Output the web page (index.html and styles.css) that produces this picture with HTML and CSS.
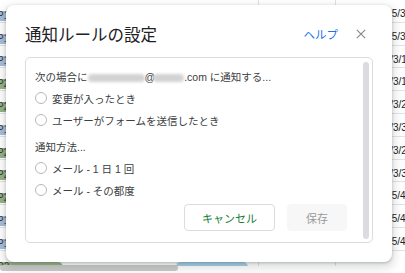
FILE: index.html
```html
<!DOCTYPE html>
<html lang="ja">
<head>
    <meta charset="UTF-8">
    <meta name="viewport" content="width=device-width, initial-scale=1.0">
    <title>通知ルールの設定</title>
    <link rel="stylesheet" href="styles.css">
</head>
<body>
    <div class="sheet">
        <div class="row"><div class="col-a"><span class="chip p1">P1</span></div><div class="col-b"></div><div class="date">2025/3/</div></div>
        <div class="row"><div class="col-a"><span class="chip p1">P1</span></div><div class="col-b"></div><div class="date">2025/3/</div></div>
        <div class="row"><div class="col-a"><span class="chip p1">P1</span></div><div class="col-b"></div><div class="date shift">2025/3/1</div></div>
        <div class="row"><div class="col-a"><span class="chip p2">P2</span></div><div class="col-b"></div><div class="date shift">2025/3/1</div></div>
        <div class="row"><div class="col-a"><span class="chip p2">P2</span></div><div class="col-b"></div><div class="date shift">2025/3/2</div></div>
        <div class="row"><div class="col-a"><span class="chip p1">P1</span></div><div class="col-b"></div><div class="date shift">2025/3/3</div></div>
        <div class="row"><div class="col-a"><span class="chip p2">P2</span></div><div class="col-b"></div><div class="date shift">2025/3/2</div></div>
        <div class="row"><div class="col-a"><span class="chip p2">P2</span></div><div class="col-b"></div><div class="date shift">2025/3/3</div></div>
        <div class="row"><div class="col-a"><span class="chip p2">P2</span></div><div class="col-b"></div><div class="date">2025/4/</div></div>
        <div class="row"><div class="col-a"><span class="chip p1">P1</span></div><div class="col-b"></div><div class="date">2025/4/</div></div>
        <div class="row"><div class="col-a"><span class="chip p1">P1</span></div><div class="col-b"></div><div class="date">2025/4/</div></div>
        <div class="row"><div class="col-a"><span class="chip p2">P2</span><span class="chip tag">対応中</span></div><div class="col-b"></div><div class="date"></div></div>
    </div>
    <div class="h-scroll"></div>

    <div class="dialog">
        <div class="dialog-head">
            <div class="dialog-title">通知ルールの設定</div>
            <a class="help" href="#">ヘルプ</a>
            <svg class="close" width="10" height="10" viewBox="0 0 10 10">
                <path d="M0.8 0.8 L9.2 9.2 M9.2 0.8 L0.8 9.2" stroke="#80868b" stroke-width="1.1" fill="none"/>
            </svg>
        </div>
        <div class="rule-box">
            <div class="rule-body">
                <div class="lead">次の場合に<span class="masked wide"></span>@<span class="masked narrow"></span>.com に通知する...</div>
                <label class="option"><span class="radio"></span>変更が入ったとき</label>
                <label class="option"><span class="radio"></span>ユーザーがフォームを送信したとき</label>
                <div class="lead method">通知方法...</div>
                <label class="option"><span class="radio"></span>メール - 1 日 1 回</label>
                <label class="option"><span class="radio"></span>メール - その都度</label>
                <div class="actions">
                    <button class="btn cancel">キャンセル</button>
                    <button class="btn save">保存</button>
                </div>
            </div>
            <div class="v-scroll"><div class="thumb"></div></div>
        </div>
    </div>
</body>
</html>
```

FILE: styles.css
```css
body {
    margin: 0;
    width: 405px;
    height: 273px;
    overflow: hidden;
    position: relative;
    background: #ffffff;
    font-family: 'Liberation Sans', 'Noto Sans CJK JP', sans-serif;
}

/* spreadsheet behind the dialog */
.sheet {
    display: flex;
    flex-direction: column;
    height: 266px;
    overflow: hidden;
}

.row {
    display: grid;
    grid-template-columns: 258px 78px 1fr;
    flex: none;
    height: 22.8px;
    box-sizing: border-box;
    border-bottom: 1px solid #e3e3e3;
}

.col-a {
    display: flex;
    align-items: flex-end;
    justify-content: space-between;
    padding-bottom: 1px;
}

.col-b {
    border-left: 1px solid #e0e0e0;
    border-right: 1px solid #e0e0e0;
}

.chip {
    height: 10px;
    line-height: 10px;
    font-size: 10px;
    color: #3a3a3a;
    border-radius: 0 5px 5px 0;
}

.chip.p1,
.chip.p2 {
    width: 66px;
    margin-left: -3px;
}

.p1 {
    background: #a5bddc;
}

.p2 {
    background: #94b186;
}

.chip.tag {
    width: 72px;
    margin-right: 10px;
    border-radius: 5px;
    background: #a3cfea;
    color: #a3cfea;
}

.date {
    padding: 8px 0 0 39px;
    font-size: 10px;
    line-height: 12px;
    color: #222222;
    white-space: nowrap;
    overflow: hidden;
}

.date.shift {
    padding-left: 32px;
}

.h-scroll {
    position: absolute;
    left: 0;
    top: 265px;
    width: 178px;
    height: 6px;
    border-radius: 3px;
    background: #c9c9c9;
}

/* dialog */
.dialog {
    position: absolute;
    left: 6px;
    top: 5px;
    width: 386px;
    height: 257px;
    background: #ffffff;
    border-radius: 8px;
    box-shadow: 0 4px 8px 3px rgba(60, 64, 67, 0.15), 0 1px 3px rgba(60, 64, 67, 0.3);
    display: flex;
    flex-direction: column;
}

.dialog-head {
    display: flex;
    align-items: center;
    height: 24px;
    padding: 17px 26px 0 19px;
    margin-bottom: 11px;
}

.dialog-title {
    flex: 1;
    font-family: 'Noto Sans CJK JP', sans-serif;
    font-size: 16.5px;
    line-height: 24px;
    color: #202124;
}

.help {
    font-family: 'Noto Sans CJK JP', sans-serif;
    font-size: 11.5px;
    color: #1a73e8;
    text-decoration: none;
    margin-right: 18px;
}

.close {
    display: block;
}

.rule-box {
    flex: 1;
    display: flex;
    margin: 0 19px 19px;
    border: 1px solid #dadce0;
    border-radius: 5px;
}

.rule-body {
    flex: 1;
    padding: 10px 13px 0 9px;
    font-size: 10.5px;
    color: #3c4043;
}

.lead {
    height: 19px;
    line-height: 19px;
    white-space: nowrap;
}

.method {
    margin-top: 7px;
}

.masked {
    display: inline-block;
    height: 8px;
    vertical-align: middle;
    background: #d2d2d2;
    border-radius: 4px;
    filter: blur(1.8px);
}

.masked.wide {
    width: 57px;
}

.masked.narrow {
    width: 31px;
    margin-left: -2px;
}

.option {
    display: flex;
    align-items: center;
    height: 22px;
    gap: 5px;
}

.radio {
    width: 12px;
    height: 12px;
    box-sizing: border-box;
    border: 1px solid #b5b8bb;
    border-radius: 50%;
}

.actions {
    display: flex;
    justify-content: flex-end;
    gap: 12px;
    margin-top: 3px;
}

.btn {
    height: 27px;
    box-sizing: border-box;
    border-radius: 4px;
    font-family: 'Noto Sans CJK JP', sans-serif;
    font-size: 11px;
    cursor: pointer;
}

.cancel {
    width: 91px;
    background: #ffffff;
    border: 1px solid #dadce0;
    color: #188038;
}

.save {
    width: 60px;
    background: #f7f7f7;
    border: 1px solid #f7f7f7;
    color: #9a9a9a;
}

.v-scroll {
    width: 6px;
    padding: 4px 3px 3px;
    display: flex;
}

.thumb {
    flex: 1;
    background: #dadce0;
    border-radius: 3px;
}
```
